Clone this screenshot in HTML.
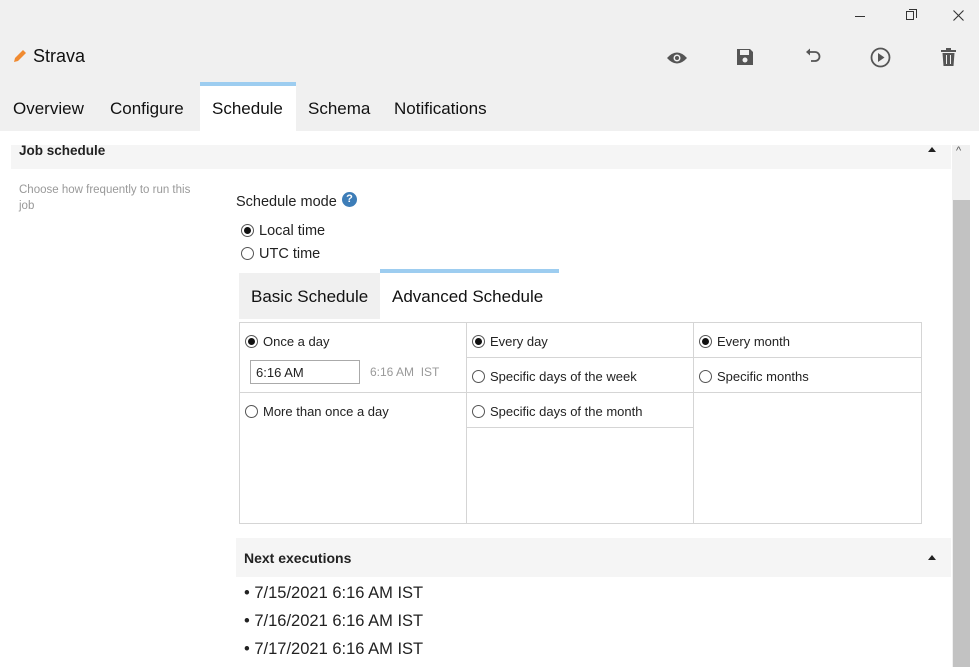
<!DOCTYPE html>
<html><head><style>
*{box-sizing:border-box;margin:0;padding:0}
body{width:979px;height:667px;overflow:hidden;background:#fff;font-family:"Liberation Sans",sans-serif;color:#222;position:relative}
.abs{position:absolute}
.top{left:0;top:0;width:979px;height:131px;background:#f0f0f0}
.tab{top:99px;font-size:17px;color:#111}
.radio{display:inline-block;width:13px;height:13px;border:1px solid #555;border-radius:50%;position:relative;vertical-align:-2px;margin-right:5px;background:#fff}
.radio.on::after{content:"";position:absolute;left:2px;top:2px;width:7px;height:7px;border-radius:50%;background:#111}
.t13{font-size:13px}
.line{background:#d5d5d5}
</style></head><body>
<div class="abs top"></div>
<div class="abs" style="left:855px;top:16px;width:10px;height:1px;background:#333"></div>
<div class="abs" style="left:906px;top:11px;width:8px;height:9px;border:1px solid #333"></div>
<div class="abs" style="left:909px;top:9px;width:8px;height:9px;border-top:1px solid #333;border-right:1px solid #333"></div>
<svg class="abs" style="left:953px;top:10px" width="11" height="11" viewBox="0 0 11 11"><path d="M0.5 0.5L10.5 10.5M10.5 0.5L0.5 10.5" stroke="#333" stroke-width="1.1"/></svg>
<svg class="abs" style="left:12px;top:48px" width="16" height="16" viewBox="0 0 16 16"><path d="M2 14 L3 10 L11 2 L14 5 L6 13 Z" fill="#f08a30"/></svg>
<div class="abs" style="left:33px;top:46px;font-size:18px;color:#111">Strava</div>
<svg class="abs" style="left:666px;top:50px" width="22" height="16" viewBox="0 0 22 16"><path d="M1 8 Q11 -3 21 8 Q11 19 1 8Z" fill="#555"/><circle cx="11" cy="8" r="3.5" fill="#f0f0f0"/><circle cx="11" cy="8" r="2" fill="#555"/></svg>
<svg class="abs" style="left:736px;top:48px" width="18" height="18" viewBox="0 0 18 18"><path d="M1 1H14L17 4V17H1Z" fill="#555"/><rect x="4" y="2" width="9" height="5" fill="#f0f0f0"/><circle cx="9" cy="12" r="2.5" fill="#f0f0f0"/></svg>
<svg class="abs" style="left:804px;top:48px" width="18" height="18" viewBox="0 0 18 18"><path d="M5 4H11A4.5 4.5 0 0 1 11 13H7" fill="none" stroke="#555" stroke-width="1.8"/><path d="M2 4L6 0.5V7.5Z" fill="#555"/></svg>
<svg class="abs" style="left:870px;top:47px" width="21" height="21" viewBox="0 0 21 21"><circle cx="10.5" cy="10.5" r="9" fill="none" stroke="#555" stroke-width="1.8"/><path d="M8 6V15L14.5 10.5Z" fill="#555"/></svg>
<svg class="abs" style="left:940px;top:47px" width="17" height="20" viewBox="0 0 17 20"><rect x="1" y="3" width="15" height="2" fill="#555"/><rect x="6" y="1" width="5" height="2" fill="#555"/><path d="M2.5 6H14.5L13.5 19H3.5Z" fill="#555"/><rect x="6" y="8" width="1" height="9" fill="#f0f0f0"/><rect x="10" y="8" width="1" height="9" fill="#f0f0f0"/></svg>
<div class="abs" style="left:200px;top:82px;width:96px;height:49px;background:#fff;border-top:4px solid #9dcdf0"></div>
<div class="abs tab" style="left:13px">Overview</div>
<div class="abs tab" style="left:110px">Configure</div>
<div class="abs tab" style="left:212px">Schedule</div>
<div class="abs tab" style="left:308px">Schema</div>
<div class="abs tab" style="left:394px">Notifications</div>
<div class="abs" style="left:11px;top:145px;width:940px;height:24px;background:#f5f5f5"></div>
<div class="abs" style="left:19px;top:143px;font-size:13.5px;font-weight:bold;color:#222">Job schedule</div>
<div class="abs" style="left:928px;top:147px;width:0;height:0;border-left:4px solid transparent;border-right:4px solid transparent;border-bottom:5px solid #222"></div>
<div class="abs" style="left:19px;top:182px;width:190px;font-size:11.5px;color:#999;line-height:16px">Choose how frequently to run this<br>job</div>
<div class="abs" style="left:952px;top:145px;width:18px;height:522px;background:#f0f0f0"></div>
<div class="abs" style="left:953px;top:200px;width:17px;height:467px;background:#c2c2c2"></div>
<div class="abs" style="left:956px;top:145px;font-size:11px;color:#555">^</div>
<div class="abs" style="left:236px;top:194px;font-size:14.5px">Schedule mode</div>
<div class="abs" style="left:342px;top:192px;width:15px;height:15px;border-radius:50%;background:#3d7db8;color:#fff;font-size:11px;font-weight:bold;text-align:center;line-height:15px">?</div>
<div class="abs" style="left:241px;top:223px;font-size:14.5px"><span class="radio on"></span>Local time</div>
<div class="abs" style="left:241px;top:246px;font-size:14.5px"><span class="radio"></span>UTC time</div>
<div class="abs" style="left:239px;top:273px;width:141px;height:46px;background:#f0f0f0"></div>
<div class="abs" style="left:380px;top:269px;width:179px;height:50px;background:#fff;border-top:4px solid #9dcdf0"></div>
<div class="abs" style="left:251px;top:287px;font-size:17px;color:#111">Basic Schedule</div>
<div class="abs" style="left:392px;top:287px;font-size:17px;color:#111">Advanced Schedule</div>
<div class="abs" style="left:239px;top:322px;width:683px;height:202px;border:1px solid #d5d5d5"></div>
<div class="abs line" style="left:466px;top:322px;width:1px;height:202px"></div>
<div class="abs line" style="left:693px;top:322px;width:1px;height:202px"></div>
<div class="abs line" style="left:239px;top:392px;width:228px;height:1px"></div>
<div class="abs line" style="left:466px;top:357px;width:456px;height:1px"></div>
<div class="abs line" style="left:466px;top:392px;width:456px;height:1px"></div>
<div class="abs line" style="left:466px;top:427px;width:228px;height:1px"></div>
<div class="abs t13" style="left:245px;top:334px"><span class="radio on"></span>Once a day</div>
<div class="abs" style="left:250px;top:360px;width:110px;height:24px;border:1px solid #aaa;font-size:13px;padding:4px 5px">6:16 AM</div>
<div class="abs" style="left:370px;top:365px;font-size:12px;color:#999">6:16 AM&nbsp; IST</div>
<div class="abs t13" style="left:245px;top:404px"><span class="radio"></span>More than once a day</div>
<div class="abs t13" style="left:472px;top:334px"><span class="radio on"></span>Every day</div>
<div class="abs t13" style="left:472px;top:369px"><span class="radio"></span>Specific days of the week</div>
<div class="abs t13" style="left:472px;top:404px"><span class="radio"></span>Specific days of the month</div>
<div class="abs t13" style="left:699px;top:334px"><span class="radio on"></span>Every month</div>
<div class="abs t13" style="left:699px;top:369px"><span class="radio"></span>Specific months</div>
<div class="abs" style="left:236px;top:538px;width:715px;height:39px;background:#f5f5f5"></div>
<div class="abs" style="left:244px;top:550px;font-size:14px;font-weight:bold">Next executions</div>
<div class="abs" style="left:928px;top:555px;width:0;height:0;border-left:4px solid transparent;border-right:4px solid transparent;border-bottom:5px solid #222"></div>
<div class="abs" style="left:244px;top:579px;font-size:16.5px;line-height:28px">• 7/15/2021 6:16 AM IST<br>• 7/16/2021 6:16 AM IST<br>• 7/17/2021 6:16 AM IST</div>
</body></html>
